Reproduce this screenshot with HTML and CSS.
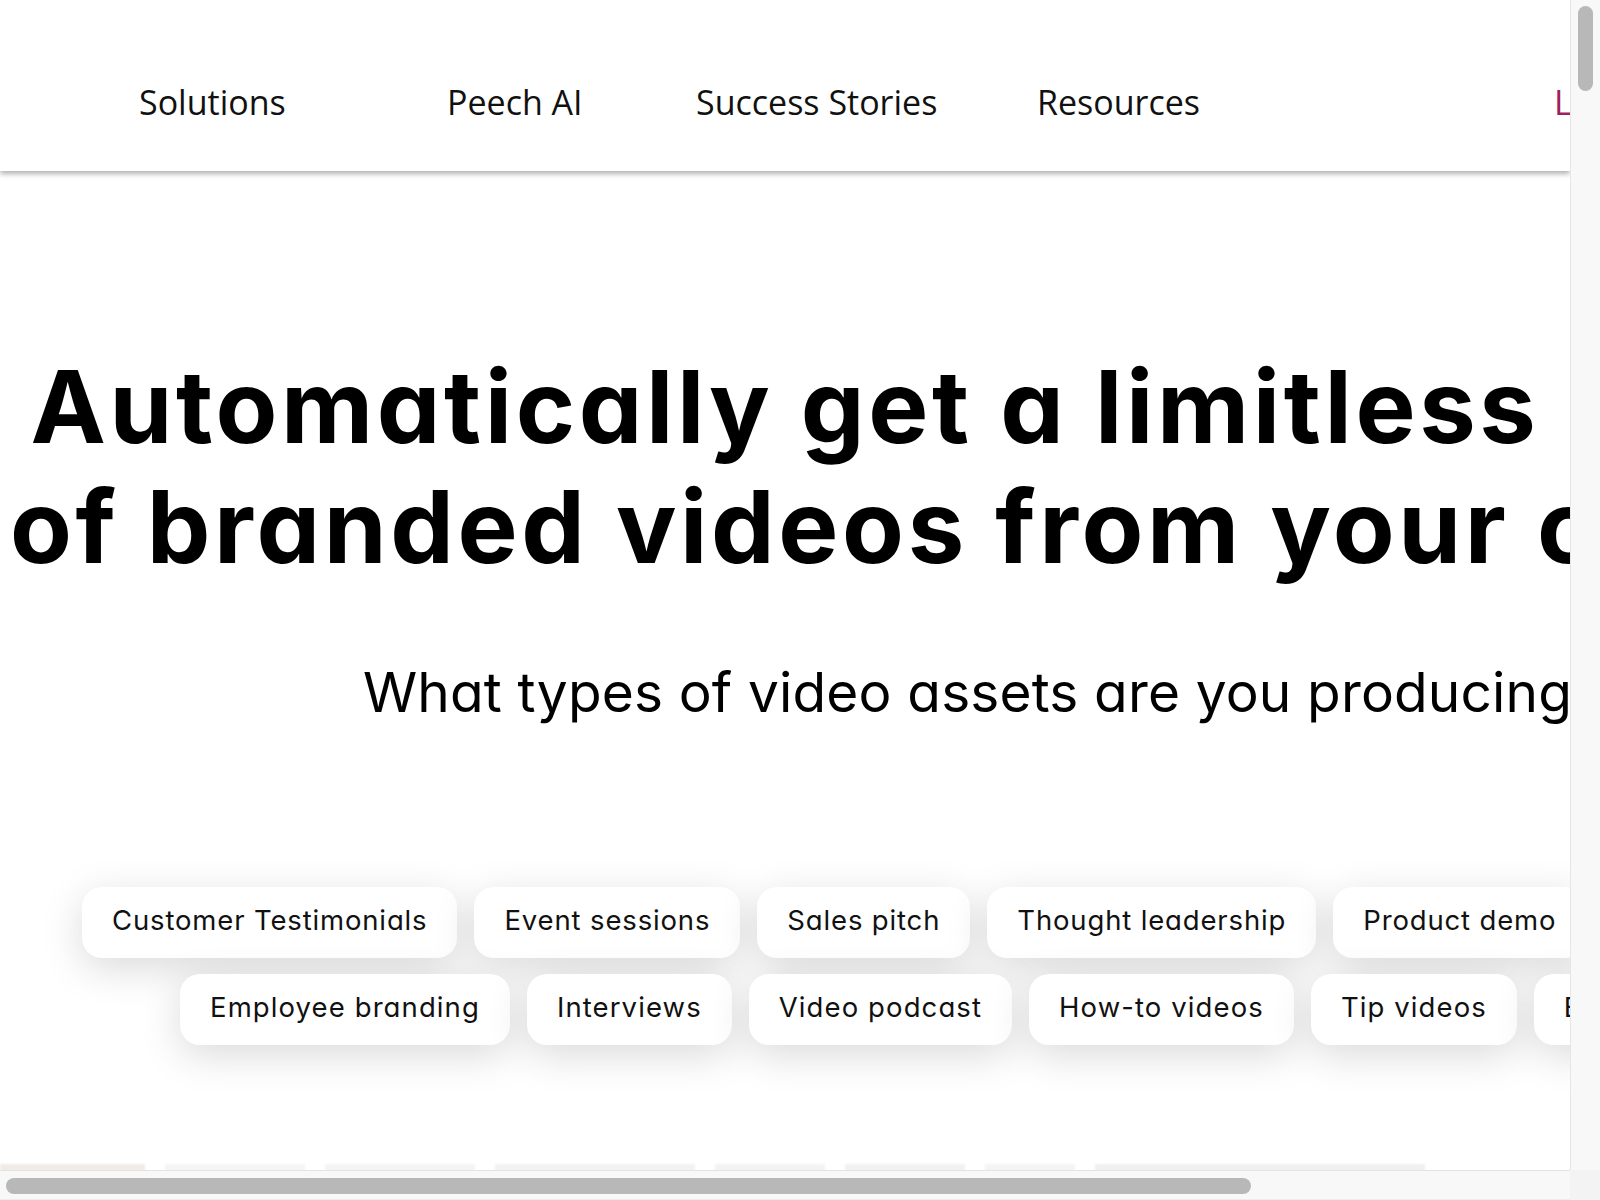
FILE: index.html
```html
<!DOCTYPE html>
<html lang="en">
<head>
<meta charset="utf-8">
<title>Peech</title>
<link rel="stylesheet" href="styles.css">
</head>
<body>
<div class="window">
  <div class="viewport">
    <header class="site-header">
      <nav class="nav">
        <a class="nav-link nav-solutions" href="#">Solutions</a>
        <a class="nav-link nav-ai" href="#">Peech AI</a>
        <a class="nav-link nav-stories" href="#">Success Stories</a>
        <a class="nav-link nav-resources" href="#">Resources</a>
        <a class="nav-link nav-login" href="#">Login</a>
      </nav>
    </header>

    <main>
      <section class="hero">
        <h1 class="hero-title">Automatically get a limitless<br>of branded videos from your content</h1>
        <p class="hero-question">What types of video assets are you producing?</p>

        <div class="pill-rows">
          <div class="pill-row row-one">
            <button class="pill">Customer Testimonials</button>
            <button class="pill">Event sessions</button>
            <button class="pill">Sales pitch</button>
            <button class="pill">Thought leadership</button>
            <button class="pill">Product demo</button>
          </div>
          <div class="pill-row row-two">
            <button class="pill">Employee branding</button>
            <button class="pill">Interviews</button>
            <button class="pill">Video podcast</button>
            <button class="pill">How-to videos</button>
            <button class="pill">Tip videos</button>
            <button class="pill">Educational</button>
          </div>
        </div>
      </section>

      <section class="logos">
        <div class="logo-strip">
          <span class="logo l1"></span>
          <span class="logo l2"></span>
          <span class="logo l3"></span>
          <span class="logo l4"></span>
          <span class="logo l5"></span>
          <span class="logo l6"></span>
          <span class="logo l7"></span>
          <span class="logo l8"></span>
        </div>
      </section>
    </main>
  </div>

  <div class="vscroll"><div class="thumb vthumb"></div></div>
  <div class="hscroll"><div class="thumb hthumb"></div></div>
  <div class="corner"></div>
</div>
</body>
</html>
```

FILE: styles.css
```css
html,
body {
  margin: 0;
  overflow: hidden;
  background: #fff;
}

body {
  font-family: "Inter", "Liberation Sans", sans-serif;
  color: #000;
}

/* browser-like frame: page viewport + scrollbars */
.window {
  display: grid;
  grid-template-columns: 1570px 30px;
  grid-template-rows: 1170px 30px;
  width: 1600px;
  height: 1200px;
}

.viewport {
  overflow: hidden;
  background: #fff;
}

.vscroll {
  background: #f8f8f8;
  border-left: 1px solid #e6e6e6;
  padding: 6px 0 0 7px;
}

.hscroll {
  background: #f8f8f8;
  border-top: 1px solid #e3e3e3;
  border-bottom: 1px solid #ececec;
  padding: 7px 0 0 6px;
  box-sizing: border-box;
}

.corner {
  background: #f3f3f3;
}

.thumb {
  background: #b8b8b8;
}
.vthumb {
  width: 15px;
  height: 85px;
  border-radius: 8px;
}
.hthumb {
  width: 1245px;
  height: 16px;
  border-radius: 8px;
}

/* header */
.site-header {
  height: 171px;
  box-sizing: border-box;
  padding-top: 79px;
  background: #fff;
  box-shadow: 0 3px 5px rgba(0, 0, 0, 0.3);
  position: relative;
  z-index: 2;
}

.nav {
  display: flex;
  align-items: flex-start;
  padding-left: 139px;
  white-space: nowrap;
}

.nav-link {
  font-family: "Open Sans", "Noto Sans", sans-serif;
  font-size: 34px;
  color: #111;
  text-decoration: none;
  flex-shrink: 0;
}
.nav-solutions { width: 308px; }
.nav-ai { width: 249px; }
.nav-stories { width: 341px; }
.nav-resources { width: 517px; }
.nav-login { color: #a21f5f; }

/* hero */
.hero {
  padding-top: 175px;
}

.hero-title {
  margin: 0;
  padding: 0 10px;
  font-family: "Inter", sans-serif;
  font-feature-settings: "cv11" 1;
  font-weight: 700;
  font-size: 101px;
  line-height: 120px;
  letter-spacing: 3.6px;
  text-align: center;
  white-space: nowrap;
}

.hero-question {
  margin: 73px 0 0 363px;
  font-family: "Inter", sans-serif;
  font-feature-settings: "cv11" 1;
  font-weight: 400;
  font-size: 55px;
  line-height: 66px;
  letter-spacing: 0.15px;
  white-space: nowrap;
}

.pill-rows {
  margin-top: 162px;
  display: flex;
  flex-direction: column;
  gap: 16px;
}

.pill-row {
  display: flex;
  gap: 17px;
  white-space: nowrap;
}
.row-one { padding-left: 82px; }
.row-two { padding-left: 180px; }

.pill {
  flex-shrink: 0;
  height: 71px;
  padding: 0 30px 5px;
  border: 0;
  border-radius: 20px;
  background: #fff;
  box-shadow: 0 10px 40px rgba(0, 0, 0, 0.15);
  font-family: "Inter", sans-serif;
  font-feature-settings: "cv11" 1;
  font-size: 27.5px;
  font-weight: 400;
  letter-spacing: 0.85px;
  color: #111;
}
.row-two .pill {
  letter-spacing: 1.1px;
}

/* next section peeking in at the bottom */
.logos {
  margin-top: 119px;
  height: 600px;
}

.logo-strip {
  display: flex;
  gap: 20px;
}
.logo {
  height: 9px;
  flex-shrink: 0;
  background: #f2f2f2;
  filter: blur(1px);
}
.l1 { width: 145px; background: #f1ebe7; }
.l2 { width: 140px; background: #f5f5f5; }
.l3 { width: 150px; background: #f4f4f4; }
.l4 { width: 200px; background: #f2f2f2; }
.l5 { width: 110px; background: #f3f3f3; }
.l6 { width: 120px; background: #f1f1f1; }
.l7 { width: 90px; background: #f4f4f4; }
.l8 { width: 330px; background: #f0f0f0; }
```
